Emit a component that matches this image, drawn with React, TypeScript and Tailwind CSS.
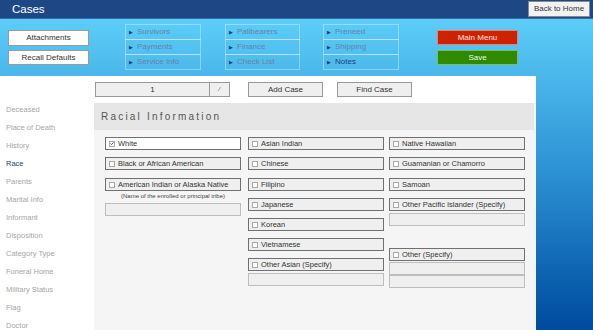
import { ReactNode } from 'react';

const sideItems = [
  'Deceased', 'Place of Death', 'History', 'Race', 'Parents', 'Marital Info', 'Informant',
  'Disposition', 'Category Type', 'Funeral Home', 'Military Status', 'Flag', 'Doctor',
];

function NavBox({ label, active }: { label: string; active?: boolean }) {
  return (
    <div className="h-[16px] flex items-center pl-[3px] border border-white/35 -mt-px first:mt-0">
      <span className="text-[5px] text-[#1b3e80] mr-[4px] leading-none">▶</span>
      <span className={'text-[8px] leading-none ' + (active ? 'text-[#1b3e80]' : 'text-[#6384a4]')}>{label}</span>
    </div>
  );
}

function Check({ label, checked, className = '' }: { label: string; checked?: boolean; className?: string }) {
  return (
    <div
      className={
        'h-[13px] flex items-center pl-[3px] border border-[#707070] ' +
        (checked ? 'bg-white ' : 'bg-[#efefef] ') +
        className
      }
    >
      <span className="w-[6px] h-[6px] border border-[#a8a8a8] bg-white mr-[3px] flex items-center justify-center">
        {checked && (
          <svg width="5" height="5" viewBox="0 0 5 5">
            <path d="M0.6 2.5 L2 3.9 L4.4 1" stroke="#333" strokeWidth="1" fill="none" />
          </svg>
        )}
      </span>
      <span className="text-[7.5px] leading-none text-[#333]">{label}</span>
    </div>
  );
}

function Field({ className = '' }: { className?: string }) {
  return <div className={'h-[13px] border border-[#bdbdbd] bg-[#efefef] ' + className} />;
}

function Col({ children, className = '' }: { children: ReactNode; className?: string }) {
  return <div className={'w-[136px] flex flex-col ' + className}>{children}</div>;
}

export default function App() {
  return (
    <div className="w-[593px] h-[330px] overflow-hidden flex flex-col font-['Liberation_Sans',Arial,sans-serif]">
      {/* Title bar */}
      <div className="h-[19px] shrink-0 bg-[#1e4785] border-b border-[#3d6aa6] flex items-center justify-between pl-[12px] pr-[3px]">
        <span className="text-[11.5px] text-white leading-none mt-[1px]">Cases</span>
        <button className="h-[16px] w-[62px] bg-[#f2f2f2] border border-[#8a8a8a] text-[8px] text-[#333]">
          Back to Home
        </button>
      </div>

      <div className="flex-1 flex flex-col bg-gradient-to-b from-[#5ccdf8] via-[#2b8fd2] to-[#00489c]">
        {/* Top controls */}
        <div className="h-[57px] shrink-0 flex items-start pl-[8px]">
          <div className="w-[81px] mt-[11px] flex flex-col gap-[4px]">
            <button className="h-[16px] bg-white border border-[#9a9a9a] text-[8px] text-[#333]">Attachments</button>
            <button className="h-[15px] bg-white border border-[#9a9a9a] text-[8px] text-[#333]">Recall Defaults</button>
          </div>
          <div className="w-[76px] ml-[36px] mt-[5px] flex flex-col">
            <NavBox label="Survivors" />
            <NavBox label="Payments" />
            <NavBox label="Service Info" />
          </div>
          <div className="w-[75px] ml-[24px] mt-[5px] flex flex-col">
            <NavBox label="Pallbearers" />
            <NavBox label="Finance" />
            <NavBox label="Check List" />
          </div>
          <div className="w-[76px] ml-[23px] mt-[5px] flex flex-col">
            <NavBox label="Preneed" />
            <NavBox label="Shipping" />
            <NavBox label="Notes" active />
          </div>
          <div className="w-[81px] ml-[38px] mt-[11px] flex flex-col gap-[5px]">
            <button className="h-[15px] bg-[#cc2200] border border-[#e88070] text-[8px] text-[#ffe8e0]">Main Menu</button>
            <button className="h-[15px] bg-[#2f8a00] border border-[#7dbb60] text-[8px] text-[#e8ffe0]">Save</button>
          </div>
        </div>

        {/* Main white panel */}
        <div className="w-[536px] flex-1 bg-white flex flex-col">
          <div className="h-[25px] shrink-0 flex items-start pt-[6px] pl-[95px]">
            <div className="w-[115px] h-[15px] bg-[#efefef] border border-[#999] flex items-center justify-center text-[8px] text-[#333]">
              1
            </div>
            <div className="w-[20px] h-[15px] bg-[#efefef] border border-[#999] border-l-0 flex items-center justify-center text-[6px] text-[#333]">
              ⁄
            </div>
            <button className="ml-[18px] w-[75px] h-[15px] bg-[#efefef] border border-[#999] text-[8px] text-[#333]">
              Add Case
            </button>
            <button className="ml-[14px] w-[75px] h-[15px] bg-[#efefef] border border-[#999] text-[8px] text-[#333]">
              Find Case
            </button>
          </div>

          <div className="flex-1 flex">
            {/* Sidebar */}
            <div className="w-[94px] shrink-0 flex flex-col pl-[6px]">
              {sideItems.map(item => (
                <div
                  key={item}
                  className={
                    'h-[18px] flex items-center text-[7.5px] ' +
                    (item === 'Race' ? 'text-[#1b3e80]' : 'text-[#a6a6a6]')
                  }
                >
                  {item}
                </div>
              ))}
            </div>

            {/* Racial information */}
            <div className="flex-1 mt-[2px] bg-[#f5f5f5] flex flex-col">
              <div className="h-[27px] mr-[2px] bg-[#e6e6e6] flex items-center pl-[7px] text-[10px] tracking-[2.2px] text-[#555]">
                Racial Information
              </div>
              <div className="flex pt-[7px] pl-[11px]">
                <Col>
                  <Check label="White" checked />
                  <Check label="Black or African American" className="mt-[7px]" />
                  <Check label="American Indian or Alaska Native" className="mt-[8px]" />
                  <div className="h-[9px] flex items-center justify-center text-[6px] text-[#444] leading-none">
                    (Name of the enrolled or principal tribe)
                  </div>
                  <Field className="mt-[3px]" />
                </Col>
                <Col className="ml-[7px]">
                  <Check label="Asian Indian" />
                  <Check label="Chinese" className="mt-[7px]" />
                  <Check label="Filipino" className="mt-[8px]" />
                  <Check label="Japanese" className="mt-[7px]" />
                  <Check label="Korean" className="mt-[7px]" />
                  <Check label="Vietnamese" className="mt-[7px]" />
                  <Check label="Other Asian (Specify)" className="mt-[7px]" />
                  <Field className="mt-[2px]" />
                </Col>
                <Col className="ml-[5px]">
                  <Check label="Native Hawaiian" />
                  <Check label="Guamanian or Chamorro" className="mt-[7px]" />
                  <Check label="Samoan" className="mt-[8px]" />
                  <Check label="Other Pacific Islander (Specify)" className="mt-[7px]" />
                  <Field className="mt-[2px]" />
                  <Check label="Other (Specify)" className="mt-[22px]" />
                  <Field className="mt-[1px] h-[12px]" />
                  <Field className="h-[12px]" />
                </Col>
              </div>
            </div>
          </div>
        </div>
      </div>
    </div>
  );
}
